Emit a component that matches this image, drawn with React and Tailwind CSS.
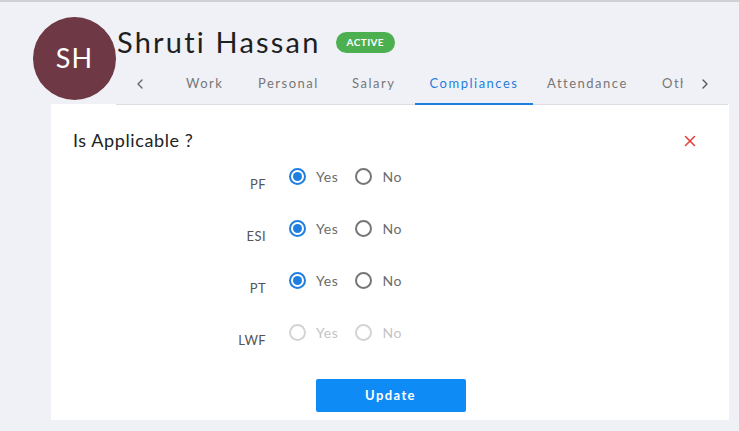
import React, { useState } from 'react';
import { ChevronLeft, ChevronRight, X } from 'lucide-react';

const Radio = ({ checked, disabled, label }) => (
  <label className="flex items-center gap-[10px]">
    <span
      className={`w-[17px] h-[17px] rounded-full border-2 flex items-center justify-center ${
        disabled ? 'border-[#d4d4d4]' : checked ? 'border-[#1e7fe0]' : 'border-[#767676]'
      }`}
    >
      {checked && <span className="w-[9px] h-[9px] rounded-full bg-[#1e7fe0]"></span>}
    </span>
    <span className={`text-[14px] tracking-[0.6px] ${disabled ? 'text-[#c4c4c4]' : 'text-[#6b6b6b]'}`}>{label}</span>
  </label>
);

const App = () => {
  const [values] = useState({ PF: 'yes', ESI: 'yes', PT: 'yes', LWF: null });

  return (
    <div className="w-[739px] h-[431px] bg-[#f0f1f6] border-t-2 border-[#d0d0d4] overflow-hidden" style={{ fontFamily: 'Lato, "Noto Sans", sans-serif' }}>
      {/* Header */}
      <div className="flex pl-[33px] pt-[15px]">
        <div className="w-[83px] h-[83px] rounded-full bg-[#6e3844] flex items-center justify-center text-white text-[27px] tracking-[1px] shrink-0">
          SH
        </div>
        <div className="flex flex-col w-[612px]">
          <div className="flex items-center gap-[15px] pl-[1px] pt-[8px] h-[42px]">
            <h1 className="text-[29px] text-[#1f1f1f] tracking-[2.2px]">Shruti Hassan</h1>
            <span className="bg-[#4caf50] text-white text-[10px] font-bold rounded-full px-[11px] py-[3px] tracking-[0.4px]">ACTIVE</span>
          </div>
          <div className="flex items-center h-[46px] pt-[4px] border-b border-[#dcdde2] text-[13px] tracking-[1.5px] text-[#777]">
            <ChevronLeft size={16} className="ml-[16px] mr-[38px] text-[#666]" />
            <span className="w-[72px]">Work</span>
            <span className="w-[94px]">Personal</span>
            <span className="w-[63px]">Salary</span>
            <span className="relative w-[118px] h-full flex items-center justify-center text-[#1e7fe0]">
              Compliances
              <span className="absolute left-0 right-0 bottom-[-1px] h-[2px] bg-[#1e7fe0]"></span>
            </span>
            <span className="ml-[14px] w-[115px]">Attendance</span>
            <span className="w-[21px] overflow-hidden whitespace-nowrap">Other</span>
            <ChevronRight size={16} className="ml-[14px] text-[#555]" />
          </div>
        </div>
      </div>

      {/* Card */}
      <div className="ml-[51px] w-[678px] h-[316px] bg-white -mt-[1px]">
        <div className="flex items-center justify-between pl-[22px] pr-[30px] pt-[23px]">
          <span className="text-[18px] text-[#222] tracking-[0.6px]">Is Applicable ?</span>
          <X size={18} className="text-[#e53935]" strokeWidth={2} />
        </div>
        <div className="flex flex-col gap-[31px] mt-[12px]">
          {Object.keys(values).map((k) => (
            <div key={k} className="flex items-start h-[21px]">
              <span className="w-[215px] text-right text-[13px] text-[#555] tracking-[0.4px] pt-[9px]">{k}</span>
              <div className="flex gap-[17px] ml-[23px]">
                <Radio checked={values[k] === 'yes'} disabled={k === 'LWF'} label="Yes" />
                <Radio checked={values[k] === 'no'} disabled={k === 'LWF'} label="No" />
              </div>
            </div>
          ))}
        </div>
        <div className="flex justify-center mt-[36px] pl-[1px]">
          <button className="w-[150px] h-[33px] bg-[#0f8bf5] text-white text-[13px] font-bold tracking-[1.4px] rounded-[2px]">
            Update
          </button>
        </div>
      </div>
    </div>
  );
};

export default App;
